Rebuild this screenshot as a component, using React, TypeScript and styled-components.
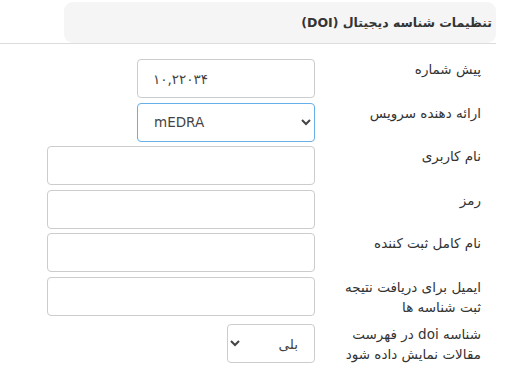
import React from "react";
import styled, { createGlobalStyle } from "styled-components";

const Global = createGlobalStyle`
  html, body { margin: 0; padding: 0; background: #fff; }
  body {
    font-family: "DejaVu Sans", "Noto Sans", sans-serif;
    font-size: 14px;
    color: #333;
  }
`;

const Page = styled.div`
  width: 496px;
  direction: rtl;
`;

const HeaderBar = styled.div`
  border-bottom: 1px solid #ddd;
  padding-top: 2px;
  display: flex;
`;

const HeaderBox = styled.div`
  width: 432px;
  height: 41px;
  box-sizing: border-box;
  background: #f5f5f5;
  border-radius: 9px;
  padding-right: 4px;
  display: flex;
  align-items: center;
  font-weight: bold;
  font-size: 12.5px;
  color: #333;
`;

const Form = styled.div`
  padding-top: 15px;
  padding-right: 15px;
`;

const Row = styled.div`
  display: flex;
  align-items: flex-start;
  gap: 16px;
  margin-bottom: 4.5px;
`;

const Label = styled.label`
  width: 150px;
  flex: none;
  padding-top: 0;
  padding-bottom: 3px;
  line-height: 20px;
  font-size: 13.5px;
  color: #333;
`;

const Input = styled.input<{ $w: number }>`
  width: ${(p) => p.$w}px;
  height: 39px;
  box-sizing: border-box;
  border: 1px solid #ccc;
  border-radius: 4px;
  padding: 0 15px;
  font-family: "DejaVu Sans", sans-serif;
  font-size: 13.5px;
  color: #444;
  background: #fff;
  outline: none;
  direction: ${(p) => (p.dir === "ltr" ? "ltr" : "rtl")};
`;

const Select = styled.select<{ $w: number; $focused?: boolean }>`
  width: ${(p) => p.$w}px;
  height: 39px;
  box-sizing: border-box;
  border: 1px solid ${(p) => (p.$focused ? "#66afe9" : "#ccc")};
  border-radius: 4px;
  padding: 0 12px;
  font-family: "DejaVu Sans", sans-serif;
  font-size: 13.5px;
  color: #444;
  background: #fff;
  outline: none;
`;

export default function App() {
  return (
    <>
      <Global />
      <Page>
        <HeaderBar>
          <HeaderBox>تنظیمات شناسه دیجیتال (DOI)</HeaderBox>
        </HeaderBar>
        <Form>
          <Row>
            <Label>پیش شماره</Label>
            <Input $w={178} dir="ltr" defaultValue="۱۰,۲۲۰۳۴" />
          </Row>
          <Row>
            <Label>ارائه دهنده سرویس</Label>
            <Select $w={178} $focused dir="ltr" defaultValue="mEDRA">
              <option value="mEDRA">mEDRA</option>
            </Select>
          </Row>
          <Row>
            <Label>نام کاربری</Label>
            <Input $w={268} />
          </Row>
          <Row>
            <Label>رمز</Label>
            <Input $w={268} type="password" />
          </Row>
          <Row>
            <Label>نام کامل ثبت کننده</Label>
            <Input $w={268} />
          </Row>
          <Row>
            <Label>ایمیل برای دریافت نتیجه ثبت شناسه ها</Label>
            <Input $w={268} />
          </Row>
          <Row>
            <Label>شناسه doi در فهرست مقالات نمایش داده شود</Label>
            <Select $w={88} dir="rtl" defaultValue="yes">
              <option value="yes">بلی</option>
            </Select>
          </Row>
        </Form>
      </Page>
    </>
  );
}
